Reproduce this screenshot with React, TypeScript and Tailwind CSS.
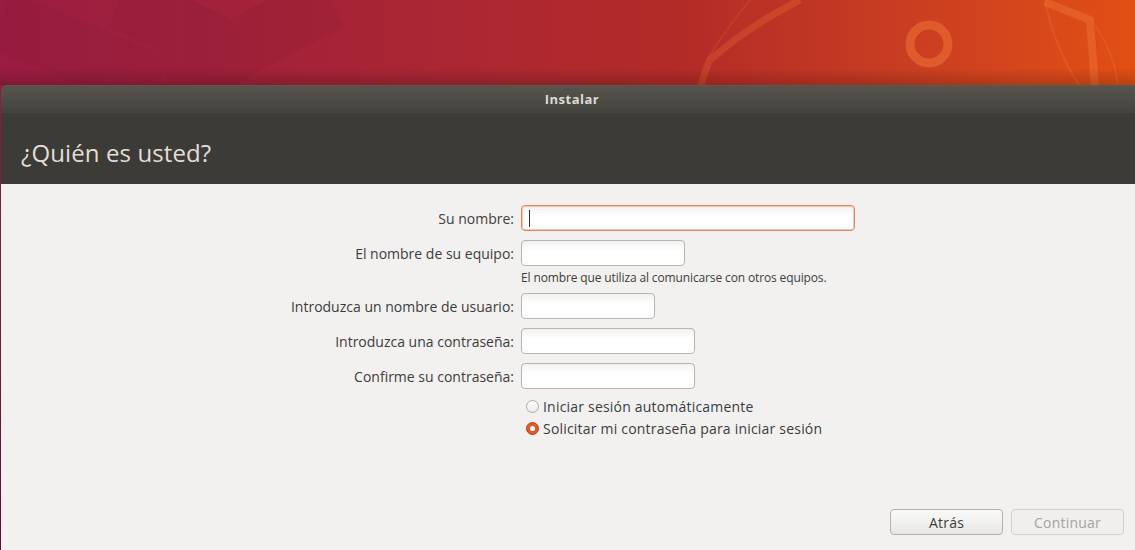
import React from "react";

const font = { fontFamily: '"Open Sans", "Noto Sans", "DejaVu Sans", sans-serif' };

const Field = ({ label, width, focused }: { label: string; width: string; focused?: boolean }) => (
  <div className="flex items-center h-[26px]">
    <div className="w-[520px] pr-[7px] text-right text-[14px] text-[#3c3c3c]">{label}</div>
    <div
      className={
        "h-[26px] rounded-[4px] border bg-gradient-to-b from-[#f1f1f0] to-[#ffffff] to-[40%] relative " +
        width +
        (focused ? " border-[#e8865c] shadow-[inset_0_0_0_1px_#f5c7b2]" : " border-[#b8b5af]")
      }
    >
      {focused && <div className="absolute left-[7px] top-[4px] h-[17px] w-px bg-[#333]" />}
    </div>
  </div>
);

const Radio = ({ label, checked }: { label: string; checked?: boolean }) => (
  <div className="flex items-center h-[22px] pl-[525px]">
    {checked ? (
      <div className="w-[13px] h-[13px] rounded-full bg-[#df5a2a] border border-[#b9461d] flex items-center justify-center">
        <div className="w-[5px] h-[5px] rounded-full bg-white" />
      </div>
    ) : (
      <div className="w-[13px] h-[13px] rounded-full bg-gradient-to-b from-[#fdfdfd] to-[#ecebe9] border border-[#aeaba6]" />
    )}
    <span className="ml-[4px] text-[14px] text-[#3c3c3c] tracking-[0.2px]">{label}</span>
  </div>
);

export default function App() {
  return (
    <div
      style={font}
      className="w-[1135px] h-[550px] overflow-hidden flex flex-col bg-gradient-to-b from-[#9d1e3e] to-[#650d3e]"
    >
      {/* wallpaper strip */}
      <div className="h-[85px] relative bg-gradient-to-r from-[#9b1c42] via-[#b32b27] via-[60%] to-[#e14f14] shrink-0">
        <svg className="absolute inset-0" width="1135" height="85" viewBox="0 0 1135 85">
          <defs>
            <linearGradient id="shade" x1="0" y1="0" x2="0" y2="1">
              <stop offset="0.8" stopColor="#000" stopOpacity="0" />
              <stop offset="1" stopColor="#000" stopOpacity="0.18" />
            </linearGradient>
          </defs>
          <path d="M0 20 L160 85 M120 0 L250 60 M330 0 L170 85" stroke="#000" strokeOpacity="0.03" strokeWidth="60" fill="none" />
          <path d="M701 86 Q705 70 710 60 Q750 25 800 0" stroke="#f27a3a" strokeOpacity="0.25" strokeWidth="7" fill="none" />
          <path d="M750 0 Q725 30 707 60" stroke="#f27a3a" strokeOpacity="0.15" strokeWidth="2" fill="none" />
          <circle cx="929" cy="44" r="19" stroke="#ef7336" strokeOpacity="0.55" strokeWidth="9" fill="none" />
          <path d="M1045 2 L1090 20 L1095 86" stroke="#f27a3a" strokeOpacity="0.4" strokeWidth="8" fill="none" />
          <path d="M1045 0 Q1055 50 1080 86 M1095 25 Q1115 55 1118 86" stroke="#f27a3a" strokeOpacity="0.25" strokeWidth="2" fill="none" />
          <rect width="1135" height="85" fill="url(#shade)" />
        </svg>
      </div>

      {/* installer window */}
      <div className="flex-1 ml-[1px] flex flex-col rounded-tl-[6px] overflow-hidden">
        <div className="h-[28px] shrink-0 border-t border-[#5c5953] bg-gradient-to-b from-[#57544e] to-[#45433e] flex items-center justify-center pl-[8px]">
          <span className="text-[13px] font-bold text-[#dfdbd2] tracking-[0.5px]">Instalar</span>
        </div>
        <div className="h-[71px] shrink-0 bg-[#3c3b37] flex items-center px-[20px]">
          <h1 className="text-[24px] text-[#e2ded8] tracking-[0.1px] pt-[8px]">¿Quién es usted?</h1>
        </div>
        <div className="flex-1 bg-[#f2f1f0] flex flex-col">
          <div className="pt-[21px] flex flex-col">
            <Field label="Su nombre:" width="w-[334px]" focused />
            <div className="mt-[9px]">
              <Field label="El nombre de su equipo:" width="w-[164px]" />
            </div>
            <div className="pl-[520px] pt-[3px] leading-[18px] text-[12px] text-[#3c3c3c] tracking-[-0.13px]">
              El nombre que utiliza al comunicarse con otros equipos.
            </div>
            <div className="mt-[6px]">
              <Field label="Introduzca un nombre de usuario:" width="w-[134px]" />
            </div>
            <div className="mt-[9px]">
              <Field label="Introduzca una contraseña:" width="w-[174px]" />
            </div>
            <div className="mt-[9px]">
              <Field label="Confirme su contraseña:" width="w-[174px]" />
            </div>
            <div className="mt-[6px]">
              <Radio label="Iniciar sesión automáticamente" />
              <Radio label="Solicitar mi contraseña para iniciar sesión" checked />
            </div>
          </div>
          <div className="mt-auto flex justify-end gap-[8px] pr-[11px] pb-[15px]">
            <button className="w-[113px] h-[26px] rounded-[4px] border border-[#b3b0aa] bg-gradient-to-b from-[#fafaf9] to-[#e8e7e5] text-[14px] text-[#3c3c3c] tracking-[0.2px]">
              Atrás
            </button>
            <button className="w-[113px] h-[26px] rounded-[4px] border border-[#d3d0cb] bg-[#f0efed] text-[14px] text-[#a6a49f] tracking-[0.2px]">
              Continuar
            </button>
          </div>
        </div>
      </div>
    </div>
  );
}
